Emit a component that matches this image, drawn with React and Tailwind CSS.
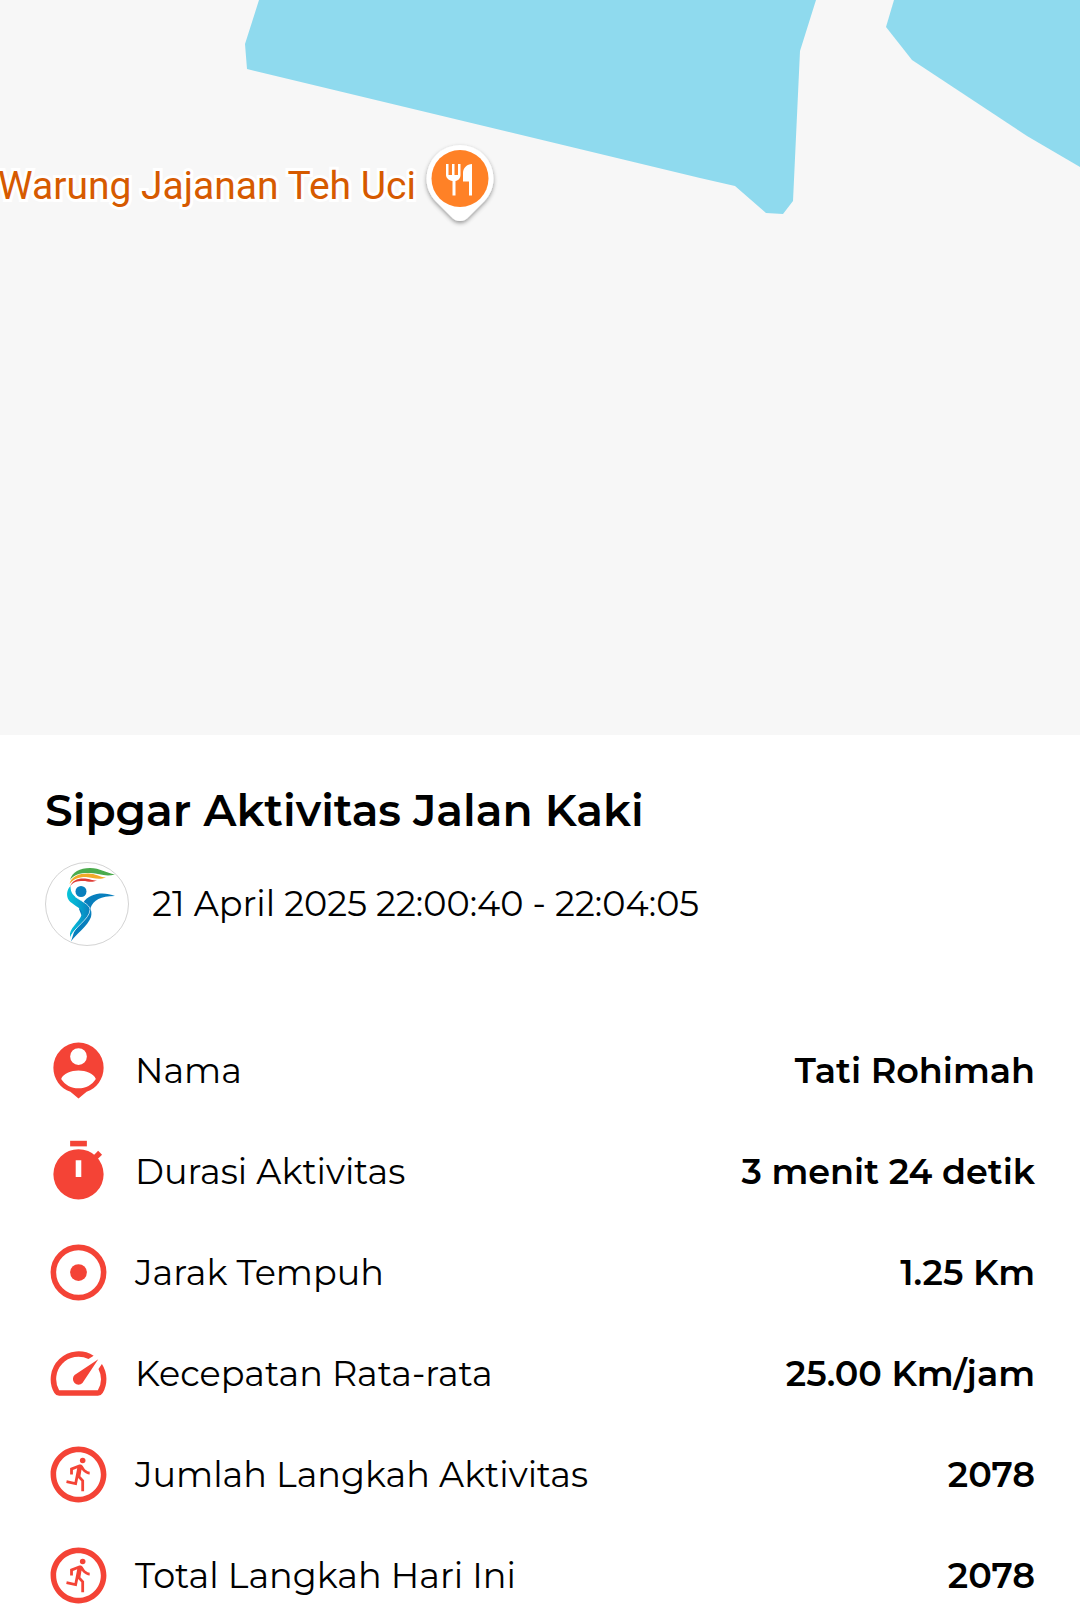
import React from 'react';
import { MdOutlineRunCircle, MdSpeed } from 'react-icons/md';

const PersonPinIcon = ({ className }) => (
  <svg viewBox="0 0 24 24" fill="currentColor" className={className} aria-hidden="true">
    <path
      fillRule="evenodd"
      d="M12 2a9 9 0 0 0-9 9c0 4 2.5 7.400 6.100 8.600L12 22l2.900-2.400C18.500 18.400 21 15 21 11a9 9 0 0 0-9-9zm0 2a3 3 0 1 1 0 6 3 3 0 0 1 0-6zm0 8c2.600 0 5.600 1.200 6.200 3-1.300 2.100-3.600 3.400-6.200 3.400S7.100 17.100 5.800 15c.6-1.800 3.600-3 6.200-3z"
    />
  </svg>
);

const TimerIcon = ({ className }) => (
  <svg viewBox="0 0 24 24" fill="currentColor" className={className} aria-hidden="true">
    <path d="M9 1h6v2H9z" />
    <path d="M17 6.600l2.040-2.040 1.410 1.410L18.400 8z" />
    <path
      fillRule="evenodd"
      d="M12 4a9 9 0 0 0 0 18 9 9 0 0 0 0-18zM11 8v6h2V8z"
    />
  </svg>
);

const TargetIcon = ({ className }) => (
  <svg viewBox="0 0 24 24" className={className} aria-hidden="true">
    <circle cx="12" cy="12" r="9" fill="none" stroke="currentColor" strokeWidth="2" />
    <circle cx="12" cy="12" r="3" fill="currentColor" />
  </svg>
);

const stats = [
  { label: 'Nama', value: 'Tati Rohimah', icon: PersonPinIcon },
  { label: 'Durasi Aktivitas', value: '3 menit 24 detik', icon: TimerIcon },
  { label: 'Jarak Tempuh', value: '1.25 Km', icon: TargetIcon },
  { label: 'Kecepatan Rata-rata', value: '25.00 Km/jam', icon: MdSpeed },
  { label: 'Jumlah Langkah Aktivitas', value: '2078', icon: MdOutlineRunCircle },
  { label: 'Total Langkah Hari Ini', value: '2078', icon: MdOutlineRunCircle },
];

const RestaurantPin = () => (
  <svg viewBox="0 0 80 90" className="h-[90px] w-20 shrink-0" aria-hidden="true">
    <defs>
      <filter id="pin-shadow" x="-20%" y="-20%" width="140%" height="140%">
        <feDropShadow dx="0" dy="2" stdDeviation="2" floodColor="#000" floodOpacity="0.4" />
      </filter>
    </defs>
    <path
      filter="url(#pin-shadow)"
      fill="#fff"
      d="M40 5a33.500 33.500 0 0 0-33.500 33.500c0 9 3.500 16.500 9 22.500L31 76.500q4 4.500 9 4.500t9-4.500L64.500 61c5.500-6 9-13.500 9-22.500A33.500 33.500 0 0 0 40 5z"
    />
    <circle cx="40" cy="38.500" r="28.500" fill="#ff8126" />
    <path
      fill="#fff"
      d="M26 24h2.500v11H32V24h2.500v11H38V24h2.500v11c0 3-2 5.500-5 6v14.500h-3V41c-3.500-.5-6.500-3-6.500-6zM52 24v31.500h-3V41.500h-6V33c0-5 4-9 9-9z"
    />
  </svg>
);

const MapView = () => (
  <div className="relative h-[735px] overflow-hidden bg-[#f7f7f7]">
    <svg
      viewBox="0 0 1080 735"
      preserveAspectRatio="xMidYMin slice"
      className="h-full w-full"
      fill="#8fdaee"
      aria-hidden="true"
    >
      <path d="M259 0L245 44L247 69L700 178L735 186L766 213L783 214L793 201L800 51L816 0z" />
      <path d="M894 0L886 27L912 60L1027 136L1080 167V0z" />
    </svg>
    <div className="absolute top-[140px] -left-0.5 flex items-start gap-1">
      <span className="font-['Roboto',sans-serif] text-[39px] leading-[92px] whitespace-nowrap text-[#d65a00] [paint-order:stroke_fill] [-webkit-text-stroke:6px_#fff]">
        Warung Jajanan Teh Uci
      </span>
      <RestaurantPin />
    </div>
  </div>
);

const Avatar = () => (
  <svg viewBox="0 0 84 84" className="size-[84px] shrink-0" role="img" aria-label="Sipgar">
    <defs>
      <linearGradient id="body-left" x1="0" y1="0" x2="1" y2="0">
        <stop offset="0" stopColor="#08c4d8" />
        <stop offset="0.4" stopColor="#06aed3" />
        <stop offset="1" stopColor="#087fbd" />
      </linearGradient>
    </defs>
    <circle cx="42" cy="42" r="41.500" fill="#fff" stroke="#c8c8c8" strokeWidth="0.800" />
    <path fill="#4bab4d" d="M25 18C27 10 35 6 45 6c10 0 16 5 25 6.500-10 2.500-16-1-24-1.500-9-.5-17 1-21 7z" />
    <path fill="#f2aa28" d="M24.500 22C26 14.500 34 11.500 43 11.500c8 0 11 3.500 18 4-8 3-13 0-20-.5-8 0-13 2.500-16.500 7z" />
    <path fill="#df3b35" d="M25 24.500C27 18.500 33 16 40 16.500c5 .5 7 2 12 2-6 2.500-9 .5-14 .5-6 0-10 1-13 5.500z" />
    <circle cx="36" cy="29.500" r="5.500" fill="#087fbd" />
    <path
      fill="#087fbd"
      d="M70 34c-10-4-25-4-32 7l-4 6 4 10-9 13-3 9.500C30 73 43 64 46 55c1-4 0-7-.5-9 3-8 10-12 24.500-12z"
    />
    <path
      fill="url(#body-left)"
      d="M25.500 24c-4 4-4.500 10-1.500 14.500 3 4 12 7 13 12 0 7-11 14-12 21v5c3-11 20-19 20-29 0-5-10-9-15-13-3.500-3-4.500-6-4.500-10.500z"
    />
    <path fill="none" stroke="#fff" strokeWidth="0.700" d="M30 34.500c5 4 15 8 15 13 0 10-17 18-20 29" />
  </svg>
);

const StatRow = ({ label, value, icon: Icon }) => (
  <div className="flex h-[67px] items-center">
    <Icon className="size-[67px] shrink-0 text-[#f44336]" />
    <dt className="ml-[23px] flex-1">{label}</dt>
    <dd className="font-semibold">{value}</dd>
  </div>
);

const App = () => {
  return (
    <main className="min-h-screen bg-white font-['Montserrat','Inter',sans-serif] text-black">
      <MapView />

      <section className="px-[45px] pt-[47px]">
        <h1 className="text-[44px] leading-[56px] font-semibold">Sipgar Aktivitas Jalan Kaki</h1>
        <div className="mt-6 flex items-center gap-[23px]">
          <Avatar />
          <p className="text-[35px] leading-[48px]">21 April 2025 22:00:40 - 22:04:05</p>
        </div>

        {/* Activity stats */}
        <dl className="mt-[91px] flex flex-col gap-[34px] text-[35px] leading-[48px]">
          {stats.map((stat) => (
            <StatRow key={stat.label} {...stat} />
          ))}
        </dl>
      </section>
    </main>
  );
};

export default App;
